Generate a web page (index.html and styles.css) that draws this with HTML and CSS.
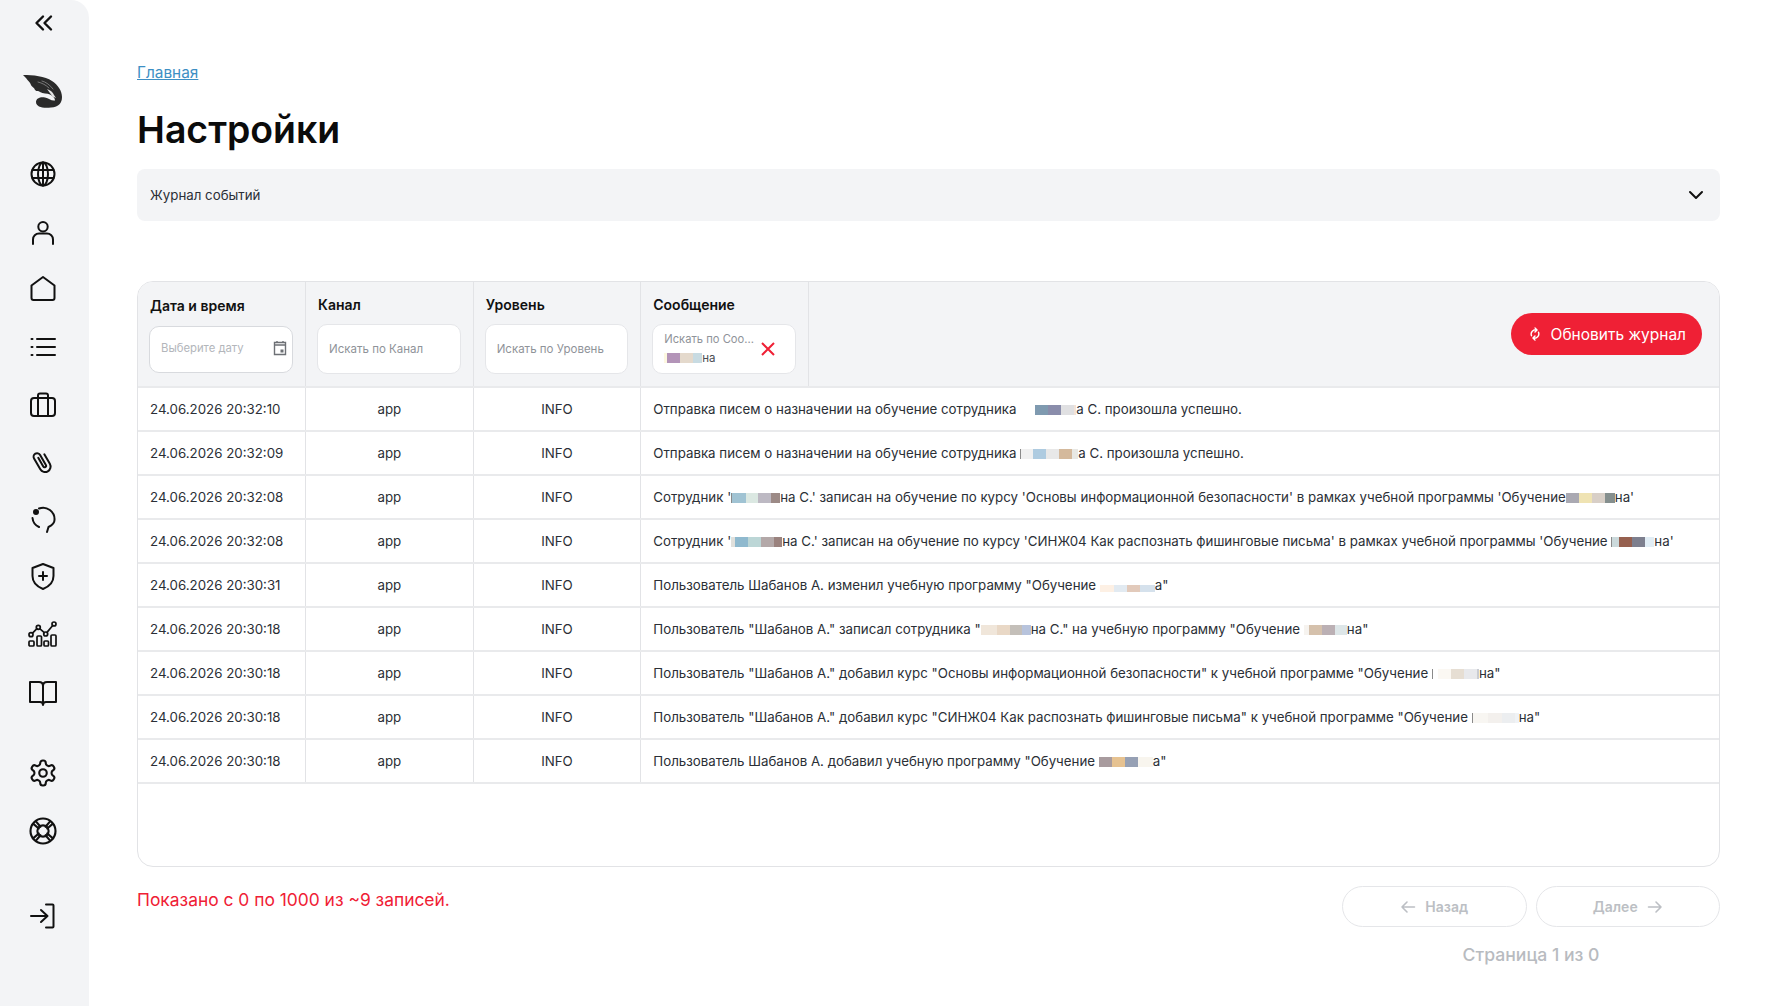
FILE: index.html
```html
<!DOCTYPE html>
<html lang="ru">
<head>
  <meta charset="UTF-8">
  <title>Настройки</title>
  <link rel="stylesheet" href="styles.css">
</head>
<body>
  <div class="layout">
    <!-- Sidebar -->
    <aside class="sidebar">
      <button class="collapse-btn">
        <svg class="icon" width="24" height="24" viewBox="0 0 24 24"><path d="M12 5.500 L5.500 12 L12 18.500 M20 5.500 L13.500 12 L20 18.500"/></svg>
      </button>
      <div class="logo">
        <svg width="40" height="34" viewBox="0 0 40 34">
          <path class="logo-body" d="M0 0 C10 0 22 1 29 6 C35 10 39 16 39 22 C39 28 36 32 28 32.500 C20 33.500 13 32 13 27 C13 23 18 21.500 22 22.500 C26 23.500 28 26 32 25.500 C32 23 30 21 27 19.500 C24 18 20 19 17 17 C15 15 14 17 12 15 C11 12 9 12 8 10 C7 7 5 6 3 3 Z"/>
          <path class="logo-head" d="M24 14 C27 15 30 17 31 20 L33 23 L29.500 21.500 C28 19 26 17 24 14 Z"/>
          <path class="logo-detail" d="M15 7 C19 8 23 10 26 13 M19 6 C23 7 27 10 30 14"/>
        </svg>
      </div>
      <nav class="nav-group">
        <a class="nav-item"><svg class="icon" width="30" height="30" viewBox="0 0 30 30"><circle cx="15" cy="15" r="11.500"/><ellipse cx="15" cy="15" rx="5" ry="11.500"/><path d="M15 3.500 V26.500 M4.500 11 H25.500 M4.500 19 H25.500"/></svg></a>
        <a class="nav-item"><svg class="icon" width="30" height="30" viewBox="0 0 30 30"><circle cx="15" cy="9.700" r="4.700"/><path d="M5 27 V22.500 a6 6 0 0 1 6-6 h8 a6 6 0 0 1 6 6 V27"/></svg></a>
        <a class="nav-item"><svg class="icon" width="30" height="30" viewBox="0 0 30 30"><path d="M15 3 L26.500 11.500 V24 a2 2 0 0 1-2 2 H5.500 a2 2 0 0 1-2-2 V11.500 Z"/></svg></a>
        <a class="nav-item"><svg class="icon" width="30" height="30" viewBox="0 0 30 30"><path d="M9 7 H27 M9 15 H27 M9 23 H27 M3.500 7 H4.500 M3.500 15 H4.500 M3.500 23 H4.500"/></svg></a>
        <a class="nav-item"><svg class="icon" width="30" height="30" viewBox="0 0 30 30"><rect x="3" y="8" width="24" height="18" rx="3"/><path d="M10 8 V5.500 a2 2 0 0 1 2-2 h6 a2 2 0 0 1 2 2 V8 M10 8 V26 M20 8 V26"/></svg></a>
        <a class="nav-item"><svg class="icon" width="30" height="30" viewBox="0 0 30 30"><g transform="rotate(-30 15 15)"><path d="M20 9 V20 a5.500 5.500 0 0 1-11 0 V7.500 a3.500 3.500 0 0 1 7 0 V19 a1.500 1.500 0 0 1-3 0 V9"/></g></svg></a>
        <a class="nav-item"><svg class="icon" width="30" height="30" viewBox="0 0 30 30"><path d="M11 3.500 A11.500 11.500 0 0 1 26.500 15 C26.500 19 22.500 21 20.500 22 L19 27 M4.500 13 A11 11 0 0 0 11 22"/><circle class="icon-dot" cx="8" cy="7" r="3"/></svg></a>
        <a class="nav-item"><svg class="icon" width="30" height="30" viewBox="0 0 30 30"><path d="M15 2 L25.500 6 V14 C25.500 21 20 25 15 27 C10 25 4.500 21 4.500 14 V6 Z M15 10 V18 M11 14 H19"/></svg></a>
        <a class="nav-item"><svg class="icon icon-thin" width="30" height="30" viewBox="0 0 30 30"><rect x="1" y="21" width="5" height="5" rx="1"/><rect x="9" y="16" width="4.500" height="10" rx="1"/><rect x="16" y="21" width="4.500" height="5" rx="1"/><rect x="23" y="15" width="5" height="11" rx="1"/><circle cx="3" cy="14.700" r="2"/><circle cx="10.300" cy="7.300" r="2"/><circle cx="17.700" cy="14" r="2"/><circle cx="26" cy="4" r="2"/><path d="M4.500 13.200 L8.900 8.700 M11.700 8.700 L16.300 12.600 M19 12.400 L24.700 5.500"/></svg></a>
        <a class="nav-item"><svg class="icon" width="30" height="30" viewBox="0 0 30 30"><path d="M15 8 C15 5.500 13.500 4 11 4 H2 V24 H12 C14 24 15 25 15 27 C15 25 16 24 18 24 H28 V4 H19 C16.500 4 15 5.500 15 8 V27"/></svg></a>
      </nav>
      <nav class="nav-group nav-group-bottom">
        <a class="nav-item"><svg class="icon icon-thin" width="30" height="30" viewBox="0 0 24 24"><path d="M12.220 2h-.44a2 2 0 0 0-2 2v.18a2 2 0 0 1-1 1.730l-.43.25a2 2 0 0 1-2 0l-.15-.08a2 2 0 0 0-2.730.73l-.22.38a2 2 0 0 0 .73 2.730l.15.1a2 2 0 0 1 1 1.720v.51a2 2 0 0 1-1 1.740l-.15.09a2 2 0 0 0-.73 2.730l.22.38a2 2 0 0 0 2.730.73l.15-.08a2 2 0 0 1 2 0l.43.25a2 2 0 0 1 1 1.730V20a2 2 0 0 0 2 2h.44a2 2 0 0 0 2-2v-.18a2 2 0 0 1 1-1.730l.43-.25a2 2 0 0 1 2 0l.15.08a2 2 0 0 0 2.730-.73l.22-.39a2 2 0 0 0-.73-2.730l-.15-.08a2 2 0 0 1-1-1.740v-.5a2 2 0 0 1 1-1.740l.15-.09a2 2 0 0 0 .73-2.730l-.22-.38a2 2 0 0 0-2.730-.73l-.15.08a2 2 0 0 1-2 0l-.43-.25a2 2 0 0 1-1-1.730V4a2 2 0 0 0-2-2z"/><circle cx="12" cy="12" r="3"/></svg></a>
        <a class="nav-item"><svg class="icon icon-thin" width="30" height="30" viewBox="0 0 24 24"><circle cx="12" cy="12" r="10"/><circle cx="12" cy="12" r="4.500"/><path d="M4.300 6.300 L8.600 10 M6.300 4.300 L10 8.600 M19.700 6.300 L15.400 10 M17.700 4.300 L14 8.600 M4.300 17.700 L8.600 14 M6.300 19.700 L10 15.400 M19.700 17.700 L15.400 14 M17.700 19.700 L14 15.400"/></svg></a>
      </nav>
      <a class="nav-item nav-logout"><svg class="icon" width="30" height="30" viewBox="0 0 30 30"><path d="M3 15 H19 M13 9 L19.500 15 L13 21 M18 3.500 H24.500 a1 1 0 0 1 1 1 V25.500 a1 1 0 0 1-1 1 H18"/></svg></a>
    </aside>

    <main class="content">
      <a class="breadcrumb" href="#">Главная</a>
      <h1>Настройки</h1>

      <div class="accordion">
        <span>Журнал событий</span>
        <svg class="icon" width="20" height="20" viewBox="0 0 20 20"><path d="M4 7 L10 13 L16 7"/></svg>
      </div>

      <div class="table-card">
        <table>
          <thead>
            <tr>
              <th class="th-date">
                <div class="th-title">Дата и время</div>
                <div class="filter filter-date">
                  <span>Выберите дату</span>
                  <svg width="14" height="16" viewBox="0 0 14 16"><path class="calendar" d="M1.500 2.500 H12.500 V14.500 H1.500 Z M1.500 5 H12.500 M4 1 V3 M10 1 V3"/><rect class="calendar-fill" x="7.500" y="9.500" width="3" height="3"/></svg>
                </div>
              </th>
              <th>
                <div class="th-title">Канал</div>
                <div class="filter">Искать по Канал</div>
              </th>
              <th>
                <div class="th-title">Уровень</div>
                <div class="filter">Искать по Уровень</div>
              </th>
              <th>
                <div class="th-title">Сообщение</div>
                <div class="filter filter-active">
                  <div class="filter-text">
                    <div class="filter-label">Искать по Соо...</div>
                    <div class="filter-value"><span class="blur blur-filter"></span>на</div>
                  </div>
                  <svg class="clear-icon" width="16" height="16" viewBox="0 0 16 16"><path d="M2 2 L14 14 M14 2 L2 14"/></svg>
                </div>
              </th>
              <th class="th-action">
                <button class="refresh-btn">
                  <svg width="14" height="14" viewBox="0 0 24 24"><path d="M6 15 A7.500 7.500 0 0 1 15 5 M12 1.500 L15.500 5 L12 8.500 M18 9 A7.500 7.500 0 0 1 9 19 M12 22.500 L8.500 19 L12 15.500"/></svg>
                  Обновить журнал
                </button>
              </th>
            </tr>
          </thead>
          <tbody>
            <tr>
              <td>24.06.2026 20:32:10</td><td class="center">app</td><td class="center">INFO</td>
              <td colspan="2">Отправка писем о назначении на обучение сотрудника <span class="blur blur-1a"></span>а С. произошла успешно.</td>
            </tr>
            <tr>
              <td>24.06.2026 20:32:09</td><td class="center">app</td><td class="center">INFO</td>
              <td colspan="2">Отправка писем о назначении на обучение сотрудника <span class="blur blur-cut blur-2a"></span>а С. произошла успешно.</td>
            </tr>
            <tr>
              <td>24.06.2026 20:32:08</td><td class="center">app</td><td class="center">INFO</td>
              <td colspan="2">Сотрудник '<span class="blur blur-cut blur-3a"></span>на С.' записан на обучение по курсу 'Основы информационной безопасности' в рамках учебной программы 'Обучение<span class="blur blur-3b"></span>на'</td>
            </tr>
            <tr>
              <td>24.06.2026 20:32:08</td><td class="center">app</td><td class="center">INFO</td>
              <td colspan="2">Сотрудник '<span class="blur blur-4a"></span>на С.' записан на обучение по курсу 'СИНЖ04 Как распознать фишинговые письма' в рамках учебной программы 'Обучение <span class="blur blur-cut blur-4b"></span>на'</td>
            </tr>
            <tr>
              <td>24.06.2026 20:30:31</td><td class="center">app</td><td class="center">INFO</td>
              <td colspan="2">Пользователь Шабанов А. изменил учебную программу "Обучение <span class="blur blur-5a"></span>а"</td>
            </tr>
            <tr>
              <td>24.06.2026 20:30:18</td><td class="center">app</td><td class="center">INFO</td>
              <td colspan="2">Пользователь "Шабанов А." записал сотрудника "<span class="blur blur-6a"></span>на С." на учебную программу "Обучение <span class="blur blur-6b"></span>на"</td>
            </tr>
            <tr>
              <td>24.06.2026 20:30:18</td><td class="center">app</td><td class="center">INFO</td>
              <td colspan="2">Пользователь "Шабанов А." добавил курс "Основы информационной безопасности" к учебной программе "Обучение <span class="blur blur-cut blur-7a"></span>на"</td>
            </tr>
            <tr>
              <td>24.06.2026 20:30:18</td><td class="center">app</td><td class="center">INFO</td>
              <td colspan="2">Пользователь "Шабанов А." добавил курс "СИНЖ04 Как распознать фишинговые письма" к учебной программе "Обучение <span class="blur blur-cut blur-8a"></span>на"</td>
            </tr>
            <tr>
              <td>24.06.2026 20:30:18</td><td class="center">app</td><td class="center">INFO</td>
              <td colspan="2">Пользователь Шабанов А. добавил учебную программу "Обучение <span class="blur blur-9a"></span>а"</td>
            </tr>
          </tbody>
        </table>
      </div>

      <div class="table-footer">
        <div class="shown-text">Показано с 0 по 1000 из ~9 записей.</div>
        <div class="pager">
          <div class="pager-buttons">
            <button class="pager-btn" disabled>
              <svg class="icon" width="16" height="16" viewBox="0 0 16 16"><path d="M14.500 8 H2 M7 3 L2 8 L7 13"/></svg>
              Назад
            </button>
            <button class="pager-btn" disabled>
              Далее
              <svg class="icon" width="16" height="16" viewBox="0 0 16 16"><path d="M1.500 8 H14 M9 3 L14 8 L9 13"/></svg>
            </button>
          </div>
          <div class="pager-text">Страница 1 из 0</div>
        </div>
      </div>
    </main>
  </div>
</body>
</html>
```

FILE: styles.css
```css
* {
  box-sizing: border-box;
}

body {
  margin: 0;
  font-family: Inter, 'Noto Sans', sans-serif;
  background: #fff;
  color: #2b2f36;
}

.layout {
  display: flex;
  height: 1006px;
  overflow: hidden;
}

/* Sidebar */
.sidebar {
  width: 89px;
  flex-shrink: 0;
  background: #f3f4f6;
  border-top-right-radius: 18px;
  display: flex;
  flex-direction: column;
  align-items: center;
  padding: 11px 3px 0 0;
}

.icon {
  display: block;
  fill: none;
  stroke: #111;
  stroke-width: 2;
  stroke-linecap: round;
  stroke-linejoin: round;
}

.icon-thin {
  stroke-width: 1.7;
}

.icon-dot {
  fill: #111;
  stroke: none;
}

.collapse-btn {
  background: none;
  border: none;
  padding: 0;
  height: 24px;
  margin-bottom: 40px;
}

.collapse-btn .icon {
  stroke-width: 2.4;
}

.logo {
  height: 34px;
  margin-bottom: 36.500px;
}

.logo-body {
  fill: #2a2a2a;
}

.logo-head {
  fill: #e4e4e4;
}

.logo-detail {
  fill: none;
  stroke: #8a8a8a;
  stroke-width: 0.8;
  stroke-linecap: round;
}

.nav-group {
  display: flex;
  flex-direction: column;
}

.nav-group-bottom {
  margin-top: 23px;
}

.nav-item {
  height: 57.6px;
  display: flex;
  align-items: center;
  justify-content: center;
}

.nav-logout {
  margin-top: 28px;
}

/* Main */
.content {
  flex: 1;
  min-width: 0;
  padding: 0 47px 0 48px;
}

.breadcrumb {
  display: block;
  width: fit-content;
  margin-top: 64px;
  font-size: 15.4px;
  line-height: 18px;
  color: #3d8fc4;
}

h1 {
  margin: 26px 0 17px;
  font-size: 37.4px;
  line-height: 44px;
  font-weight: 600;
  color: #0b0b0b;
}

.accordion {
  height: 52px;
  padding: 0 14px 0 13px;
  background: #f3f4f6;
  border-radius: 8px;
  display: flex;
  align-items: center;
  justify-content: space-between;
  font-size: 13.3px;
  color: #2b2f36;
}

.table-card {
  height: 586px;
  margin-top: 60px;
  border: 1px solid #e2e3e6;
  border-radius: 16px;
  overflow: hidden;
}

table {
  width: 100%;
  table-layout: fixed;
  border-collapse: collapse;
}

th {
  width: 167.6px;
  height: 105px;
  padding: 14px 12px 10px;
  background: #f3f4f6;
  text-align: left;
  vertical-align: top;
  border-right: 1px solid #e2e3e6;
  border-bottom: 2px solid #e9eaec;
}

.th-action {
  width: auto;
  border-right: none;
  vertical-align: middle;
  text-align: right;
  padding: 0 17px 0 0;
}

.th-title {
  font-size: 14px;
  line-height: 18px;
  font-weight: 600;
  color: #111;
  margin-bottom: 10px;
}

.th-date .th-title {
  margin-top: 1px;
  margin-bottom: 11px;
}

.filter {
  width: calc(100% + 1px);
  height: 50px;
  margin-left: -1px;
  padding: 0 11px;
  background: #fff;
  border: 1px solid #e5e6e9;
  border-radius: 10px;
  display: flex;
  align-items: center;
  font-size: 11.5px;
  font-weight: 400;
  color: #8f9399;
}

.filter-date {
  height: 47px;
  justify-content: space-between;
  padding: 0 5px 3px 11px;
  font-size: 11.3px;
  color: #b3b6bb;
  border-color: #d8dade;
}

.calendar {
  fill: none;
  stroke: #6d7075;
  stroke-width: 1.4;
}

.calendar-fill {
  fill: #6d7075;
}

.filter-active {
  justify-content: space-between;
}

.filter-label {
  font-size: 11.2px;
  line-height: 18px;
  white-space: nowrap;
}

.filter-value {
  line-height: 20px;
  color: #4a4d52;
  font-size: 11.5px;
}

.clear-icon {
  fill: none;
  stroke: #ef2035;
  stroke-width: 2;
  margin-right: 8px;
}

.refresh-btn {
  height: 42px;
  padding: 0 16px 0 17px;
  background: #ef2035;
  color: #fff;
  border: none;
  border-radius: 22px;
  font-family: inherit;
  font-size: 15.5px;
  display: inline-flex;
  align-items: center;
  gap: 9px;
}

.refresh-btn svg {
  fill: none;
  stroke: #fff;
  stroke-width: 2.4;
  stroke-linecap: round;
  stroke-linejoin: round;
}

td {
  height: 44px;
  padding: 0 12px;
  font-size: 13.3px;
  color: #2b2f36;
  white-space: nowrap;
  border-right: 1px solid #e2e3e6;
  border-bottom: 2px solid #e9eaec;
}

td:last-child {
  border-right: none;
}

.center {
  text-align: center;
}

/* Pixelated name blocks */
.blur {
  display: inline-block;
  height: 10px;
  vertical-align: -1px;
}

.blur-cut {
  border-left: 1.5px solid #8a8a8a;
}

.blur-filter { width: 38px; background: linear-gradient(90deg, #fdf8e0 0 3px, #b394b8 3px 16px, #e4d9cc 16px 29px, #c8dbe2 29px); }
.blur-1a { width: 56px; background: linear-gradient(90deg, #fff 0 15px, #7f9ab0 15px 28px, #8a8dab 28px 41px, #e0e0e2 41px 54px, #f3e3d8 54px); }
.blur-2a { width: 58px; background: linear-gradient(90deg, #f0f0f0 0 12px, #aecbe0 12px 25px, #e8e8e8 25px 38px, #d4b99c 38px 51px, #e8e8e4 51px); }
.blur-3a { width: 49px; background: linear-gradient(90deg, #a0c3d3 0 14px, #dbe8e2 14px 26px, #bdb9c3 26px 39px, #9c8a86 39px); }
.blur-3b { width: 49px; background: linear-gradient(90deg, #aaa9b2 0 13px, #efe3b3 13px 26px, #d8cfc7 26px 39px, #858f8e 39px); }
.blur-4a { width: 51px; background: linear-gradient(90deg, #e0e0dc 0 4px, #8fb9ce 4px 17px, #bcd6d6 17px 30px, #b3a8a8 30px 43px, #9a827e 43px); }
.blur-4b { width: 43px; background: linear-gradient(90deg, #cbd9db 0 7px, #96604f 7px 20px, #7d7f8e 20px 33px, #e1edf5 33px); }
.blur-5a { width: 55px; height: 7px; vertical-align: -2px; background: linear-gradient(90deg, #fdf0e4 0 14px, #e2eaf1 14px 27px, #e2cabb 27px 40px, #d5e1ec 40px); }
.blur-6a { width: 50px; background: linear-gradient(90deg, #f0e6da 0 16px, #e9d8c6 16px 29px, #c4bfb9 29px 41px, #b7c3dc 41px); }
.blur-6b { width: 43px; background: linear-gradient(90deg, #f6f3ef 0 5px, #d5c1ac 5px 18px, #bbb0b4 18px 31px, #dde6e8 31px); }
.blur-7a { width: 47px; background: linear-gradient(90deg, #fff 0 5px, #fbf8f3 5px 18px, #e6ded3 18px 31px, #e8e9ec 31px 44px, #c9ccd2 44px); }
.blur-8a { width: 47px; background: linear-gradient(90deg, #f8f6f2 0 15px, #f3f0ed 15px 29px, #eceef0 29px 42px, #f0f3f6 42px); }
.blur-9a { width: 54px; background: linear-gradient(90deg, #a89b9e 0 13px, #e6c291 13px 26px, #96a0b4 26px 39px, #f8f5ee 39px); }

/* Footer */
.table-footer {
  display: flex;
  justify-content: space-between;
  align-items: flex-start;
  margin-top: 19px;
}

.shown-text {
  margin-top: 2px;
  font-size: 17.4px;
  line-height: 24px;
  color: #ef2035;
}

.pager {
  width: 378px;
}

.pager-buttons {
  display: flex;
  gap: 9px;
}

.pager-btn {
  flex: 1;
  height: 41px;
  background: #fff;
  border: 1px solid #e5e6e9;
  border-radius: 21px;
  font-family: inherit;
  font-size: 14px;
  font-weight: 600;
  color: #bcbfc4;
  display: flex;
  align-items: center;
  justify-content: center;
  gap: 9px;
}

.pager-btn .icon {
  stroke: #bcbfc4;
  stroke-width: 1.6;
}

.pager-text {
  margin-top: 16px;
  text-align: center;
  font-size: 17.6px;
  line-height: 24px;
  font-weight: 500;
  color: #b8bbc0;
}
```
